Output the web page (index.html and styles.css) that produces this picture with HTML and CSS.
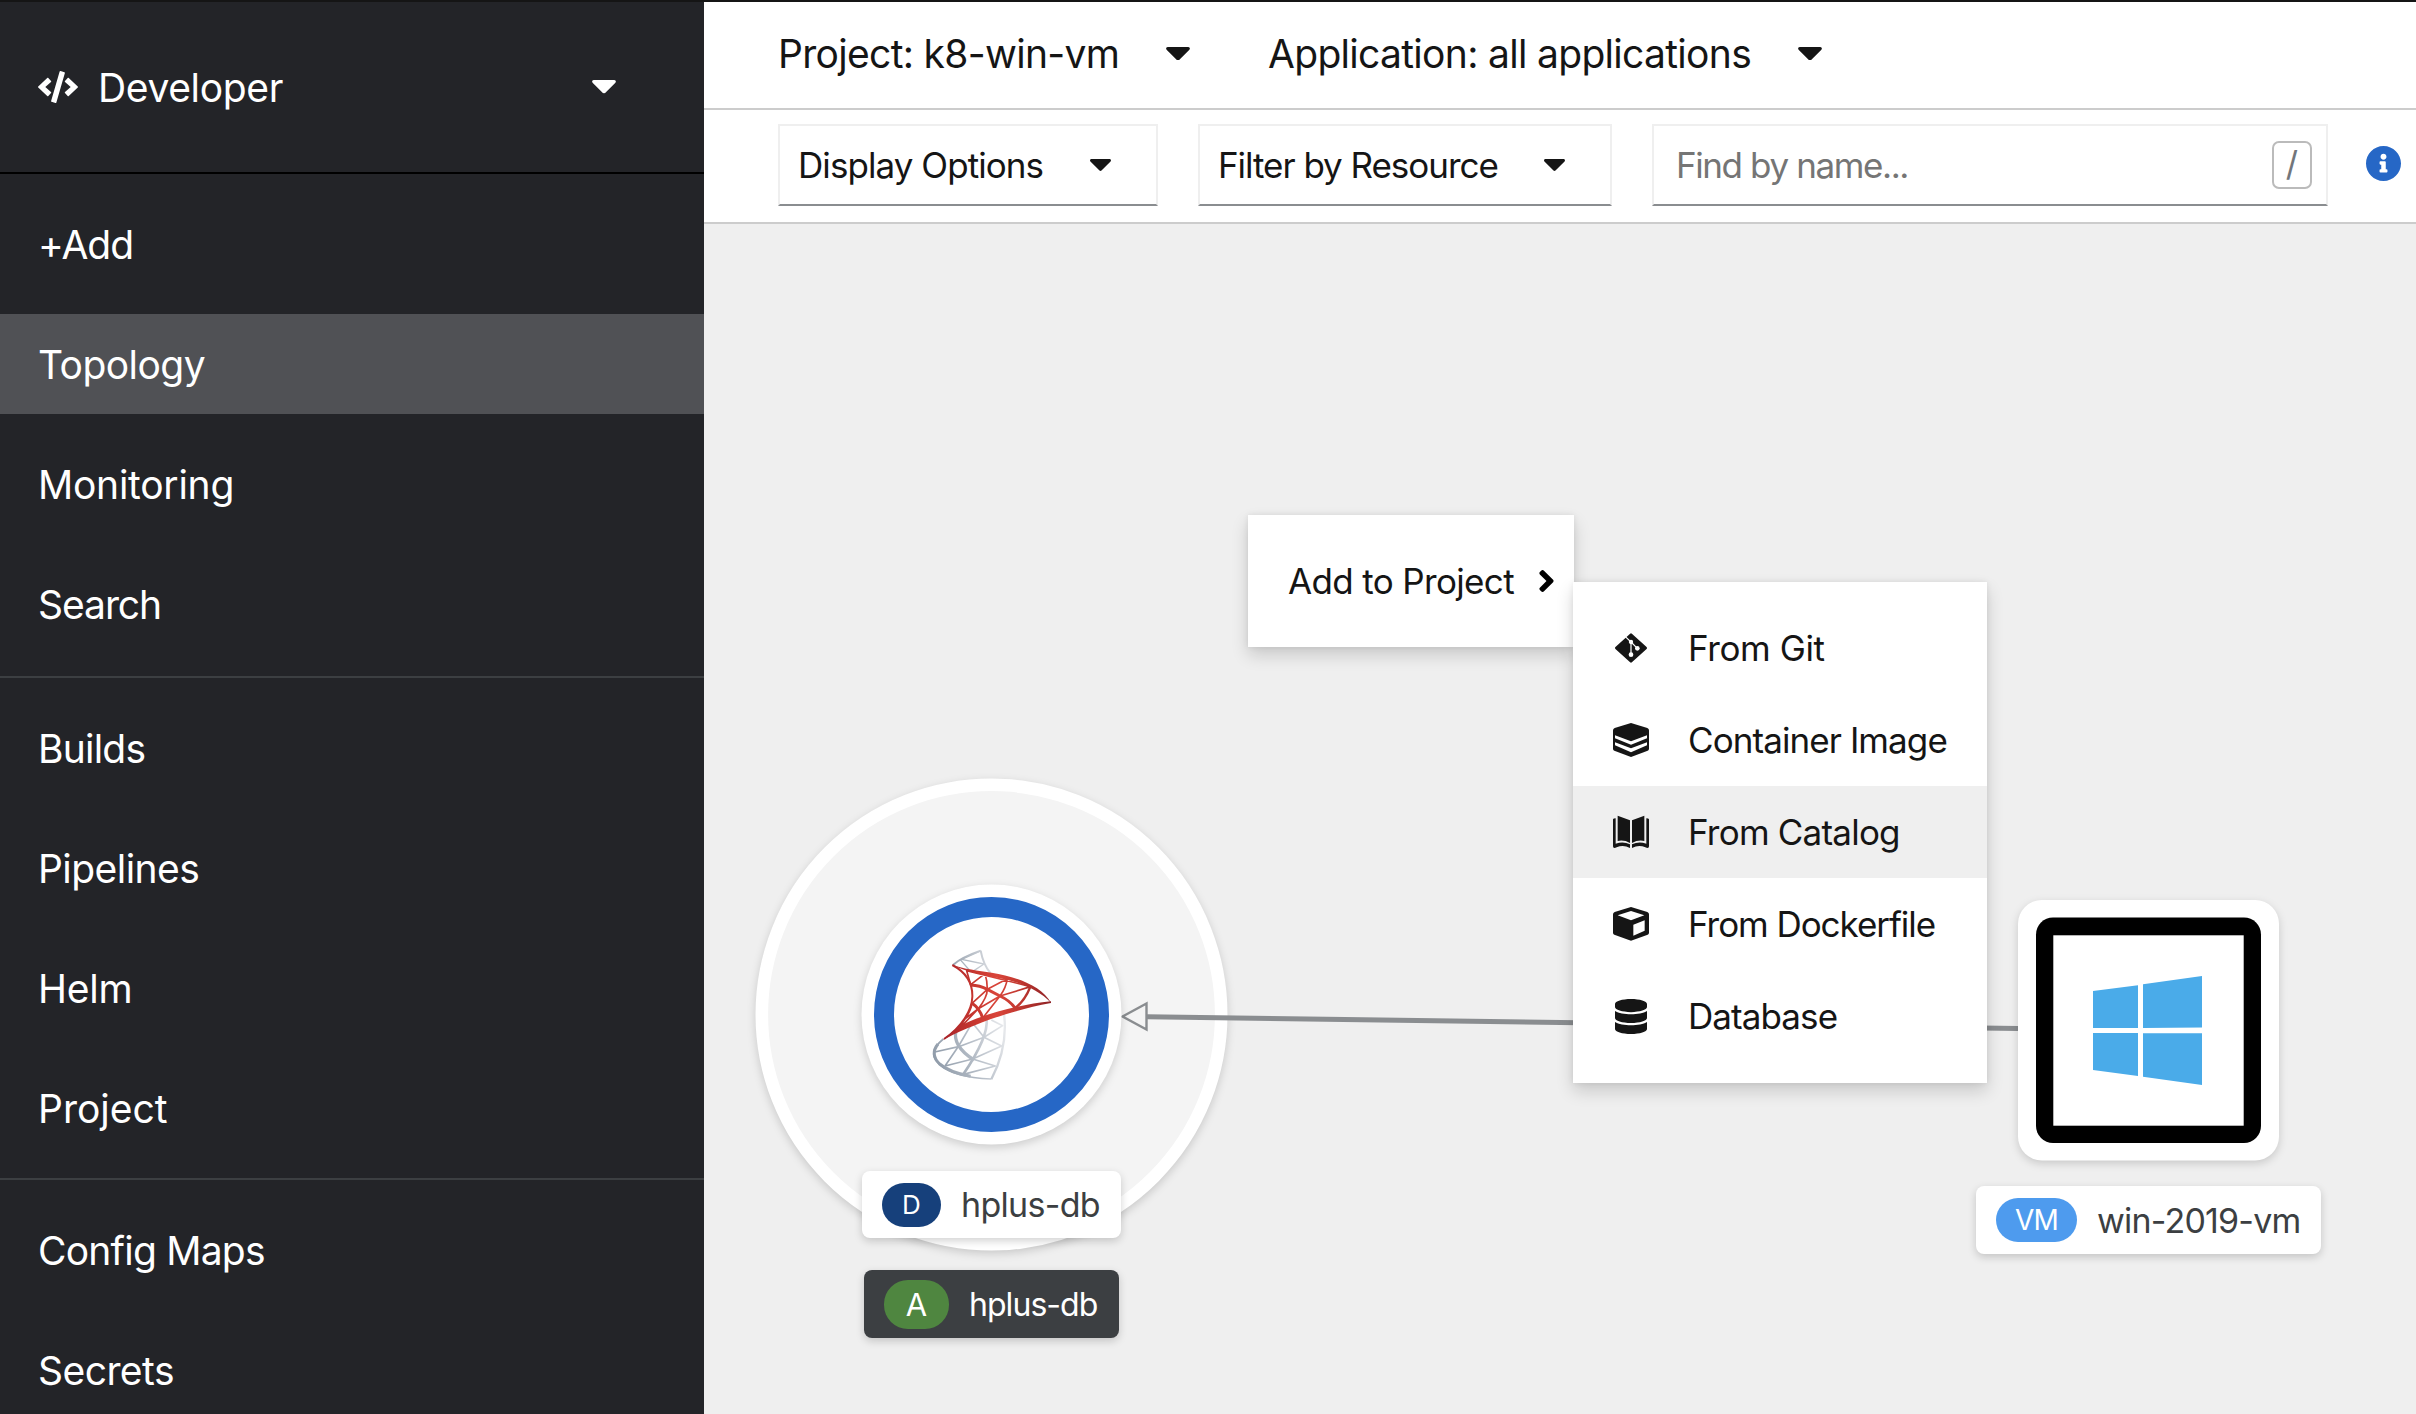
FILE: index.html
```html
<!DOCTYPE html>
<html lang="en">
<head>
<meta charset="utf-8">
<title>Topology</title>
<link rel="stylesheet" href="styles.css">
</head>
<body>
<svg class="defs" width="0" height="0" aria-hidden="true">
  <symbol id="caret" viewBox="11 192 298 169"><path d="M31.3 192h257.3c17.8 0 26.7 21.5 14.1 34.1L174.1 354.7c-7.8 7.8-20.5 7.8-28.3 0L17.2 226.1C4.6 213.5 13.5 192 31.3 192z"/></symbol>
</svg>
<div class="app">
  <aside class="sidebar">
    <div class="perspective">
      <svg class="code-icon" viewBox="0 0 640 512"><path d="M278.9 511.5l-61-17.7c-6.4-1.8-10-8.5-8.2-14.9L346.2 8.7c1.8-6.4 8.5-10 14.9-8.2l61 17.7c6.4 1.8 10 8.5 8.2 14.9L293.8 503.3c-1.9 6.4-8.5 10.1-14.9 8.2zm-114-112.2l43.5-46.4c4.6-4.9 4.3-12.7-.8-17.2L117 256l90.6-79.7c5.1-4.5 5.5-12.3.8-17.2l-43.5-46.4c-4.5-4.8-12.1-5.1-17-.5L3.8 247.2c-5.1 4.7-5.1 12.8 0 17.5l144.1 135.1c4.9 4.6 12.5 4.4 17-.5zm327.2.6l144.1-135.1c5.1-4.7 5.1-12.8 0-17.5L492.1 112.1c-4.8-4.5-12.4-4.3-17 .5L431.6 159c-4.6 4.9-4.3 12.7.8 17.2L523 256l-90.6 79.7c-5.1 4.5-5.5 12.3-.8 17.2l43.5 46.4c4.5 4.9 12.1 5.1 17 .6z"/></svg>
      <span class="perspective-name">Developer</span>
      <svg class="caret"><use href="#caret"/></svg>
    </div>
    <nav>
      <ul class="nav-section first">
        <li class="nav-item track-10">+Add</li>
        <li class="nav-item track-6 current">Topology</li>
        <li class="nav-item track-3">Monitoring</li>
        <li class="nav-item track-10">Search</li>
      </ul>
      <ul class="nav-section">
        <li class="nav-item track-8">Builds</li>
        <li class="nav-item track-6">Pipelines</li>
        <li class="nav-item track-3">Helm</li>
        <li class="nav-item">Project</li>
      </ul>
      <ul class="nav-section">
        <li class="nav-item track-8">Config Maps</li>
        <li class="nav-item track-6">Secrets</li>
      </ul>
    </nav>
  </aside>
  <main class="main">
    <header class="context-bar">
      <div class="context project"><span>Project: k8-win-vm</span><svg class="caret"><use href="#caret"/></svg></div>
      <div class="context application"><span>Application: all applications</span><svg class="caret"><use href="#caret"/></svg></div>
    </header>
    <div class="toolbar">
      <div class="field display"><span>Display Options</span><svg class="caret small"><use href="#caret"/></svg></div>
      <div class="field filter"><span>Filter by Resource</span><svg class="caret small"><use href="#caret"/></svg></div>
      <div class="field search"><span class="placeholder">Find by name...</span><kbd class="key">/</kbd></div>
      <svg class="info" viewBox="8 8 496 496"><path d="M256 8C119.043 8 8 119.083 8 256c0 136.997 111.043 248 248 248s248-111.003 248-248C504 119.083 392.957 8 256 8zm0 110c23.196 0 42 18.804 42 42s-18.804 42-42 42-42-18.804-42-42 18.804-42 42-42zm56 254c0 6.627-5.373 12-12 12h-88c-6.627 0-12-5.373-12-12v-24c0-6.627 5.373-12 12-12h12v-64h-12c-6.627 0-12-5.373-12-12v-24c0-6.627 5.373-12 12-12h64c6.627 0 12 5.373 12 12v100h12c6.627 0 12 5.373 12 12v24z"/></svg>
    </div>
    <section class="canvas">
      <svg class="graph" viewBox="704 224 1712 1190">
        <defs>
          <linearGradient id="red" gradientUnits="userSpaceOnUse" x1="130" y1="0" x2="451" y2="0">
            <stop offset="0" stop-color="#a8232a"/><stop offset=".3" stop-color="#c8372f"/><stop offset=".5" stop-color="#d9453a"/><stop offset=".72" stop-color="#c0372f"/><stop offset="1" stop-color="#8f2226"/>
          </linearGradient>
          <linearGradient id="grey" gradientUnits="userSpaceOnUse" x1="100" y1="600" x2="320" y2="530">
            <stop offset="0" stop-color="#8f9ba9"/><stop offset=".5" stop-color="#b3bbc5"/><stop offset="1" stop-color="#e6e8eb"/>
          </linearGradient>
          <linearGradient id="grey-top" gradientUnits="userSpaceOnUse" x1="158" y1="316" x2="268" y2="320">
            <stop offset="0" stop-color="#9aa5b1"/><stop offset="1" stop-color="#d6d9de"/>
          </linearGradient>
        </defs>
        <g class="lift"><circle cx="991.5" cy="1014.5" r="229.7" fill="#f4f4f4" stroke="#fff" stroke-width="12.6"/></g>
        <path d="M1147 1016.8L2018 1028.6" stroke="#8a8d90" stroke-width="5"/>
        <path d="M1122.5 1016.5L1146.5 1003.5V1029.5Z" fill="#f4f4f4" stroke="#8a8d90" stroke-width="2.4"/>
        <circle class="lift" cx="991.5" cy="1014.5" r="130" fill="#fff"/>
        <circle cx="991.5" cy="1014.5" r="107.5" fill="#fff" stroke="#2667c6" stroke-width="20"/>
        <g class="sql" transform="translate(900 860) scale(.33333)">
          <g stroke="url(#grey-top)" stroke-width="4">
            <path stroke-width="6" d="M159 315Q184 292 242 272"/>
            <path d="M242 272Q250 314 271 339" stroke-width="6"/>
            <path d="M242 273L185 298L252 312L222 332M180 298L208 330"/>
          </g>
          <g stroke="url(#grey)" stroke-width="5">
            <path d="M130 537C96 565 93 588 117 612C146 640 206 654 274 657" stroke-width="5"/>
            <path d="M114 552C98 572 98 592 119 612C143 633 175 642 212 649" stroke-width="9"/>
            <path d="M312 462C321 530 304 600 274 658" stroke-width="7"/>
            <path d="M168 512C160 545 178 572 222 600" stroke-width="10"/>
            <path d="M260 476C265 520 226 590 190 643" stroke-width="8"/>
            <path d="M176 560L104 576M176 558L135 618M176 560L252 532M176 558L212 496M252 532L222 494M252 532L308 497L274 480M252 532L305 558L218 597M218 597L286 618L190 643M218 597L135 618"/>
          </g>
          <g stroke="url(#red)" stroke-width="6">
            <path d="M157 315C200 338 218 372 217 410C216 450 186 500 132 537"/>
            <path fill="url(#red)" stroke="none" d="M157 314C190 327 235 332 275 338C350 350 425 378 453 428C420 394 365 368 310 357C260 346 200 338 157 314Z"/>
            <path fill="url(#red)" stroke="none" d="M453 424C350 434 235 468 175 500L128 540C190 508 300 458 453 429Z"/>
            <path d="M200 332L212 374L255 341Q262 362 262 388L322 356Q318 384 300 408L392 380Z" stroke-width="5" fill="none"/>
            <path d="M262 388L216 430M262 388Q262 412 235 446M300 408L235 446M300 408L250 472M235 446L196 476M235 446L172 512M216 430Q212 460 172 508" stroke-width="5"/>
            <path d="M212 375Q240 376 262 388L300 408Q330 422 345 444M216 430Q238 444 248 474" stroke-width="9"/>
            <path d="M392 378Q374 424 345 444" stroke-width="7"/>
          </g>
        </g>
        <rect class="lift" x="2018" y="900" width="261" height="260.5" rx="24" fill="#fff"/>
        <rect x="2036" y="917.5" width="225" height="225.5" rx="17" fill="#000"/>
        <rect x="2053.3" y="935.3" width="190.4" height="190.4" fill="#fff"/>
        <path fill="#4aabe9" d="M2093 991L2138 985.3V1028H2093ZM2143 984.3L2202 976V1027.5L2143 1028ZM2093 1033H2138V1076L2093 1070ZM2143 1033.2H2202V1085L2143 1076.7Z"/>
      </svg>
      <div class="label deployment"><span class="badge">D</span><span>hplus-db</span></div>
      <div class="label group"><span class="badge">A</span><span>hplus-db</span></div>
      <div class="label machine"><span class="badge">VM</span><span>win-2019-vm</span></div>

      <div class="menu root-menu">
        <span>Add to Project</span>
        <svg class="angle" viewBox="25 96 207 320"><path d="M224.3 273l-136 136c-9.4 9.4-24.6 9.4-33.9 0l-22.6-22.6c-9.4-9.4-9.4-24.6 0-33.9l96.4-96.4-96.4-96.4c-9.4-9.4-9.4-24.6 0-33.9L54.3 103c9.4-9.4 24.6-9.4 33.9 0l136 136c9.5 9.4 9.5 24.6.1 34z"/></svg>
      </div>
      <ul class="menu sub-menu">
        <li class="track-4"><svg class="ico" viewBox="69 58 108 108"><path stroke="#151515" stroke-width="8" stroke-linejoin="round" d="M123 72L167 112L123 152L79 112Z"/><g stroke="#fff" fill="none" stroke-width="3.6"><path d="M106 78L123 94V132M123 94L142 113"/></g><g fill="#fff"><circle cx="123" cy="94" r="6.5"/><circle cx="123" cy="132" r="7"/><circle cx="142" cy="113" r="7"/></g></svg><span>From Git</span></li>
        <li class="track-9"><svg class="ico" viewBox="69 335 108 108"><path d="M123 338L172 353Q177 355 177 360V415Q177 419 173 421L123 440L73 421Q69 419 69 415V360Q69 355 74 353Z"/><path fill="#fff" d="M75 375L123 393L171 375V384L123 403L75 384ZM75 396L123 414L171 396V405L123 426L75 405Z"/></svg><span>Container Image</span></li>
        <li class="track-8 hover"><svg class="ico" viewBox="69 611 108 108"><path d="M83 616L120 630V698Q102 688 83 692ZM163 616L126 630V698Q144 688 163 692Z"/><path d="M69 627Q70 624 77 624V700Q100 692 120 702V713Q100 702 80 711Q69 716 69 708ZM177 627Q176 624 169 624V700Q146 692 126 702V713Q146 702 166 711Q177 716 177 708Z"/></svg><span>From Catalog</span></li>
        <li class="track-10"><svg class="ico" viewBox="69 887 108 108"><path d="M123 890L172 905Q177 907 177 912V967Q177 971 173 973L123 991L73 973Q69 971 69 967V912Q69 907 74 905Z"/><path fill="#fff" d="M123 902L163 915L123 930L83 915ZM130 943L164 930V961L130 976Z"/></svg><span>From Dockerfile</span></li>
        <li class="track-9"><svg class="ico db" viewBox="0 0 448 512" preserveAspectRatio="none"><path d="M448 73.143v45.714C448 159.143 347.667 192 224 192S0 159.143 0 118.857V73.143C0 32.857 100.333 0 224 0s224 32.857 224 73.143zM448 176v102.857C448 319.143 347.667 352 224 352S0 319.143 0 278.857V176c48.125 33.143 136.208 48.572 224 48.572S399.874 209.143 448 176zm0 160v102.857C448 479.143 347.667 512 224 512S0 479.143 0 438.857V336c48.125 33.143 136.208 48.572 224 48.572S399.874 369.143 448 336z"/></svg><span>Database</span></li>
      </ul>
    </section>
  </main>
</div>
</body>
</html>
```
FILE: styles.css
```css
* { box-sizing: border-box; }
body { margin: 0; font-family: Inter, "Liberation Sans", sans-serif; color: #151515; }
ul { margin: 0; padding: 0; list-style: none; }
.defs { position: absolute; }
.app { display: flex; width: 2416px; height: 1414px; overflow: hidden; border-top: 2px solid #151515; white-space: nowrap; }
.caret { width: 24px; height: 13.5px; fill: currentColor; flex: none; }
.caret.small { width: 21px; height: 12px; }

/* letter-spacing steps */
.track-3 { letter-spacing: -.25px; }
.track-4 { letter-spacing: -.4px; }
.track-6 { letter-spacing: -.55px; }
.track-8 { letter-spacing: -.78px; }
.track-9 { letter-spacing: -.92px; }
.track-10 { letter-spacing: -1.05px; }

.sidebar { width: 704px; flex: none; background: #232428; color: #fff; font-size: 39px; }
.perspective { display: flex; align-items: center; height: 172px; padding: 0 88px 0 38px; border-bottom: 2px solid #000; }
.code-icon { width: 40px; height: 32px; fill: #fff; }
.perspective-name { margin-left: 20px; flex: 1; letter-spacing: -.35px; }
.nav-section { display: flex; flex-direction: column; gap: 20px; padding: 20px 0; border-bottom: 2px solid #3c3f42; }
.nav-section.first { padding-bottom: 22px; }
.nav-item { display: flex; align-items: center; height: 100px; padding-left: 38px; }
.current { background: #505155; }

.main { flex: 1; display: flex; flex-direction: column; min-width: 0; background: #fff; }
.context-bar { display: flex; height: 108px; border-bottom: 2px solid #ccc; padding-left: 74px; font-size: 39px; letter-spacing: -.69px; }
.context { display: flex; align-items: center; justify-content: space-between; height: 103px; }
.project { width: 412px; }
.application { width: 554px; margin-left: 78px; }
.toolbar { display: flex; height: 114px; padding: 14px 0 0 74px; border-bottom: 2px solid #ccc; font-size: 35px; }
.field { display: flex; align-items: center; justify-content: space-between; height: 82px; border: 2px solid #efefef; border-bottom-color: #8a8d90; }
.display { width: 380px; padding: 0 45px 0 18px; letter-spacing: -.93px; }
.filter { width: 414px; margin-left: 40px; padding: 0 45px 0 18px; letter-spacing: -1.04px; }
.search { width: 676px; margin-left: 40px; padding: 0 14px 0 22px; letter-spacing: -1.4px; }
.placeholder { color: #757575; }
.key { width: 40px; height: 48px; border: 2px solid #bbb; border-radius: 7px; color: #72767b; font: 34px/42px Inter, sans-serif; letter-spacing: 0; text-align: center; }
.info { width: 35px; height: 35px; margin: 22px 0 0 38px; fill: #2667c6; }

.canvas { position: relative; flex: 1; background: #efefef; }
.graph { display: block; width: 1712px; height: 1190px; }
.lift { filter: drop-shadow(0 3px 4px rgba(3, 3, 3, .16)); }
.sql { fill: none; stroke-linejoin: round; }

.label { position: absolute; display: flex; align-items: center; height: 67px; border-radius: 8px; background: #fff; color: #3c3f42; font-size: 34px; letter-spacing: -.7px; box-shadow: 0 3px 8px rgba(3, 3, 3, .18); }
.badge { display: flex; align-items: center; justify-content: center; color: #fff; letter-spacing: 0; }
.deployment { left: 158px; top: 947px; width: 259px; padding-left: 20px; }
.deployment .badge { width: 59px; height: 44px; margin-right: 20px; border-radius: 22px; background: #16407b; font-size: 26px; }
.group { left: 160px; top: 1046px; width: 255px; height: 68px; padding-left: 20px; background: #3c3f42; color: #fff; font-size: 32px; letter-spacing: -.95px; }
.group .badge { width: 65px; height: 49px; margin-right: 20px; border-radius: 24px; background: #4f8640; font-size: 31px; letter-spacing: 0; }
.machine { left: 1272px; top: 962px; width: 345px; height: 68px; padding-left: 20px; letter-spacing: -.8px; }
.machine .badge { width: 81px; height: 44px; margin-right: 20px; border-radius: 22px; background: #4e9bee; font-size: 28px; letter-spacing: -.8px; }

.menu { position: absolute; background: #fff; font-size: 35px; box-shadow: 0 8px 16px rgba(3, 3, 3, .16), 0 0 6px rgba(3, 3, 3, .08); }
.root-menu { display: flex; align-items: center; justify-content: space-between; left: 544px; top: 290.5px; width: 326px; height: 132px; padding: 0 20px 0 40px; letter-spacing: -.65px; }
.angle { width: 15px; height: 22px; }
.sub-menu { left: 869px; top: 358px; width: 414px; height: 501px; padding: 20px 0; }
.sub-menu li { display: flex; align-items: center; height: 92px; padding-left: 40px; }
.sub-menu .hover { background: #efefef; }
.ico { width: 36px; height: 36px; margin-right: 39px; fill: #151515; }
.ico.db { width: 32px; height: 35px; margin: 0 41px 0 2px; }
```
